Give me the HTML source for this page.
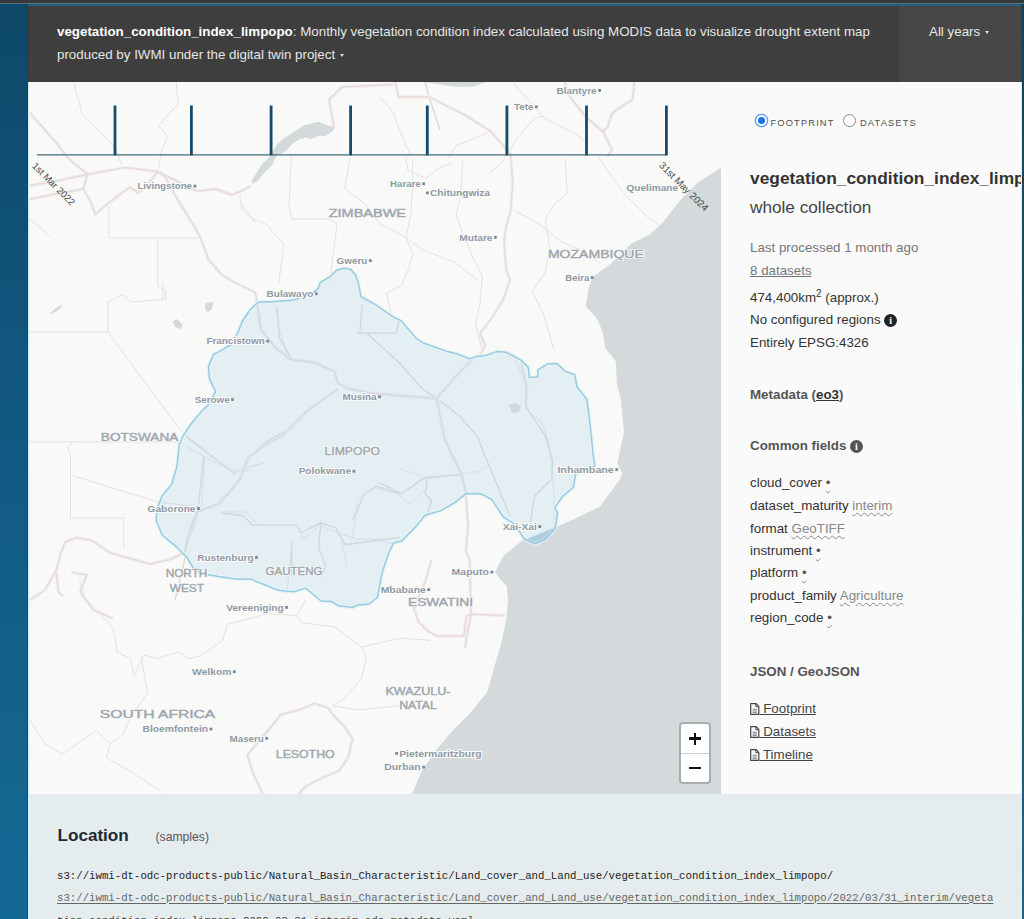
<!DOCTYPE html>
<html><head><meta charset="utf-8">
<style>
html,body{margin:0;padding:0;}
body{width:1024px;height:919px;overflow:hidden;position:relative;background:#37383a;font-family:"Liberation Sans",sans-serif;}
#lbar{position:absolute;left:0;top:4px;width:28px;height:915px;background:linear-gradient(#0d4868,#11577f 40%,#146994);box-shadow:inset -1px 0 0 rgba(20,50,70,0.35);}
#rbar{position:absolute;left:1022px;top:4px;width:2px;height:915px;background:linear-gradient(#15405a,#1d5572 50%,#245f80);}
#topline{position:absolute;left:0;top:3px;width:1024px;height:1px;background:#5a7479;}
#tealline{position:absolute;left:28px;top:4px;width:993px;height:2px;background:#1f5f78;}
#header{position:absolute;left:28px;top:6px;width:994px;height:76px;background:#3e3e3e;color:#e6e6e6;}
#htext{position:absolute;left:29px;top:14px;width:845px;font-size:13.35px;line-height:23px;}
#htext b{color:#fff;}
#years{position:absolute;left:871px;top:0;width:122px;height:76px;background:#474747;}
#years > span{position:absolute;left:30px;top:14px;white-space:nowrap;font-size:13.35px;line-height:23px;color:#e6e6e6;}
.caret{display:inline-block;width:0;height:0;border-left:2.5px solid transparent;border-right:2.5px solid transparent;border-top:3px solid #ddd;vertical-align:middle;margin-left:5px;}
#map{position:absolute;left:28px;top:82px;width:693px;height:712px;overflow:hidden;background:#f9f9f8;}
#panel{position:absolute;left:721px;top:82px;width:301px;height:712px;background:#fafafa;color:#333;font-size:13.35px;}
#loc{position:absolute;left:28px;top:794px;width:994px;height:125px;background:#e5ecee;}

.t{position:absolute;left:29px;white-space:nowrap;font-size:13.35px;line-height:23px;color:#333;}
.gray{color:#777;}
.b{font-weight:bold;color:#555;}
.u{text-decoration:underline;}
.wavy{color:#888;text-decoration:underline wavy #8a8a8a;text-decoration-thickness:1px;text-underline-offset:2px;}
.info{display:inline-block;width:13px;height:13px;border-radius:50%;background:#222;color:#fff;font-size:10px;line-height:13px;text-align:center;font-weight:bold;font-family:"Liberation Serif",serif;vertical-align:0.5px;margin-left:3.5px;}
.radio{position:absolute;width:11px;height:11px;border-radius:50%;border:1px solid #888;background:#fff;}
.rlabel{position:absolute;font-size:9.3px;letter-spacing:1.15px;color:#505050;white-space:nowrap;line-height:12px;}
.fic{display:inline-block;width:9.5px;height:12px;vertical-align:-1.5px;margin-right:0;}
.mono{position:absolute;left:29px;font-family:"Liberation Mono",monospace;font-size:10.7px;line-height:14px;white-space:nowrap;}
</style></head><body>
<div id="topline"></div>
<div id="lbar"></div><div id="rbar"></div>
<div id="tealline"></div>
<div id="header">
 <div id="htext"><b>vegetation_condition_index_limpopo</b>: Monthly vegetation condition index calculated using MODIS data to visualize drought extent map produced by IWMI under the digital twin project<span class="caret"></span></div>
 <div id="years"><span>All years<span class="caret"></span></span></div>
</div>
<div id="map"><svg id="mapsvg" width="693" height="712" viewBox="28 82 693 712" style="position:absolute;left:0;top:0">
<rect x="28" y="82" width="693" height="712" fill="#f9f9f8"/>
<path d="M367.0 333.2 L398.8 362.5 L423.2 389.4 L437.9 399.2" fill="none" stroke="#dad6d4" stroke-width="1.3"/>
<path d="M437.9 399.2 L459.9 416.3 L477.0 435.8 L486.7 460.0 L499.3 489.8 L509.7 516.0" fill="none" stroke="#dad6d4" stroke-width="1.3"/>
<path d="M286.7 430.0 L262.3 444.6 L245.2 461.7 L240.3 478.8 L230.6 491.0 L220.8 503.2 L198.8 510.6 L193.9 525.2 L186.6 544.7 L184.2 561.8 L175.0 600.0" fill="none" stroke="#dad6d4" stroke-width="1.3"/>
<path d="M425.0 82.0 L430.0 100.0 L440.0 130.0" fill="none" stroke="#dad6d4" stroke-width="1.3"/>
<path d="M520.9 362.5 L525.8 382.0 L525.8 406.5 L535.5 421.1 L545.3 435.8 L552.6 460.0 L551.9 478.7 L534.7 496.0 L530.4 521.6" fill="none" stroke="#dad6d4" stroke-width="1.3"/>
<path d="M398.8 321.0 L396.4 333.2 L357.3 333.2" fill="none" stroke="#dad6d4" stroke-width="1.3"/>
<path d="M362.2 304.0 L359.8 333.2" fill="none" stroke="#dad6d4" stroke-width="1.3"/>
<path d="M277.2 307.2 L279.2 338.0 L291.5 358.4" fill="none" stroke="#dad6d4" stroke-width="1.3"/>
<path d="M203.7 456.9 L198.8 503.2" fill="none" stroke="#dad6d4" stroke-width="1.3"/>
<path d="M186.6 437.3 L235.4 473.9" fill="none" stroke="#dad6d4" stroke-width="1.3"/>
<path d="M220.8 513.0 L242.8 515.4 L252.5 525.2 L296.5 525.2 L301.4 532.5 L320.9 522.8 L335.5 527.7 L345.3 544.7 L400.0 537.4" fill="none" stroke="#dad6d4" stroke-width="1.3"/>
<path d="M352.6 520.3 L364.8 493.5 L377.0 486.2 L400.0 493.5" fill="none" stroke="#dad6d4" stroke-width="1.3"/>
<path d="M291.6 542.3 L291.6 576.5" fill="none" stroke="#dad6d4" stroke-width="1.3"/>
<path d="M320.9 522.8 L318.5 547.2 L325.8 566.7 L320.9 576.5" fill="none" stroke="#dad6d4" stroke-width="1.3"/>
<path d="M380.0 483.0 L401.5 493.7 L423.0 478.7 L461.6 474.4" fill="none" stroke="#dad6d4" stroke-width="1.3"/>
<path d="M427.3 478.7 L425.1 493.7 L431.6 500.2 L427.3 515.2" fill="none" stroke="#dad6d4" stroke-width="1.3"/>
<path d="M28.0 332.0 L108.0 332.0 L178.0 427.0 L188.0 437.0 L233.0 472.0 L250.0 470.0" fill="none" stroke="#e4e1df" stroke-width="1"/>
<path d="M108.0 332.0 L108.0 302.0 L123.0 294.5 L130.5 302.0 L163.0 299.5 L163.0 282.0" fill="none" stroke="#e4e1df" stroke-width="1"/>
<path d="M28.0 442.0 L178.0 442.0" fill="none" stroke="#e4e1df" stroke-width="1"/>
<path d="M73.0 442.0 L68.0 447.0 L70.5 457.0 L70.5 518.0 L123.7 518.0 L123.7 548.7" fill="none" stroke="#e4e1df" stroke-width="1"/>
<path d="M73.0 475.8 L158.0 502.0 L198.0 507.0" fill="none" stroke="#e4e1df" stroke-width="1"/>
<path d="M108.8 206.6 L108.8 237.9 L198.7 237.9" fill="none" stroke="#e4e1df" stroke-width="1"/>
<path d="M157.7 237.9 L157.7 286.7 L165.5 290.6 L165.5 300.0" fill="none" stroke="#e4e1df" stroke-width="1"/>
<path d="M73.7 82.0 L82.4 114.6 L99.8 132.0 L115.0 147.3 L121.6 164.7" fill="none" stroke="#e4e1df" stroke-width="1"/>
<path d="M176.0 82.0 L178.2 103.8 L158.6 125.5 L167.3 136.4 L160.8 153.8 L158.6 169.0" fill="none" stroke="#e4e1df" stroke-width="1"/>
<path d="M28.0 217.0 L49.8 236.5" fill="none" stroke="#e4e1df" stroke-width="1"/>
<path d="M239.7 195.0 L241.6 208.6 L255.3 222.3" fill="none" stroke="#e4e1df" stroke-width="1"/>
<path d="M380.3 97.2 L393.0 112.5 L405.7 145.5 L410.7 153.0 L405.7 158.0 L408.2 170.8 L426.0 178.4 L438.7 168.3 L451.4 163.2" fill="none" stroke="#e4e1df" stroke-width="1"/>
<path d="M291.5 155.6 L289.0 203.8 L291.5 219.0 L329.5 219.0 L337.1 224.1 L329.5 282.5" fill="none" stroke="#e4e1df" stroke-width="1"/>
<path d="M349.8 158.0 L344.8 188.6 L365.0 203.8 L380.0 224.0" fill="none" stroke="#e4e1df" stroke-width="1"/>
<path d="M448.8 158.0 L456.4 145.5 L488.0 132.8" fill="none" stroke="#e4e1df" stroke-width="1"/>
<path d="M240.7 203.8 L253.4 219.0 L266.0 224.1 L283.8 244.4 L278.8 282.5" fill="none" stroke="#e4e1df" stroke-width="1"/>
<path d="M276.0 307.0 L279.0 327.4 L287.7 356.7" fill="none" stroke="#e4e1df" stroke-width="1"/>
<path d="M412.6 160.0 L412.6 189.2 L410.5 215.3 L406.1 237.0 L412.6 254.5 L408.3 269.7 L401.8 285.0 L386.5 293.6 L390.9 313.2" fill="none" stroke="#e4e1df" stroke-width="1"/>
<path d="M463.0 160.0 L460.5 195.7 L456.2 215.3 L462.7 232.7 L471.4 254.5 L482.3 276.2 L480.1 302.3 L475.8 324.1 L482.3 350.0" fill="none" stroke="#e4e1df" stroke-width="1"/>
<path d="M565.0 158.7 L567.2 193.5 L554.1 204.4 L545.4 219.6 L549.7 248.0 L545.4 271.9 L532.3 291.5 L543.2 313.2 L554.1 350.0" fill="none" stroke="#e4e1df" stroke-width="1"/>
<path d="M380.0 224.0 L401.8 234.9 L423.5 250.1 L456.2 263.2 L477.9 280.6" fill="none" stroke="#e4e1df" stroke-width="1"/>
<path d="M514.9 211.0 L532.3 219.6 L545.4 228.3 L560.6 241.4 L580.2 250.1 L600.0 263.2" fill="none" stroke="#e4e1df" stroke-width="1"/>
<path d="M598.3 156.5 L611.8 176.8 L625.3 195.0 L647.8 217.5 L661.7 227.0" fill="none" stroke="#e4e1df" stroke-width="1"/>
<path d="M512.6 82.0 L544.0 118.0 L575.8 134.0 L587.0 143.0" fill="none" stroke="#e4e1df" stroke-width="1"/>
<path d="M490.0 172.3 L501.3 163.3 L517.0 138.4 L535.0 118.0 L544.0 116.0" fill="none" stroke="#e4e1df" stroke-width="1"/>
<path d="M512.4 354.0 L528.0 388.0 L525.4 408.8 L541.1 421.9 L549.0 442.8 L551.6 466.3 L554.2 497.7 L554.2 529.0" fill="none" stroke="#e4e1df" stroke-width="1"/>
<path d="M79.3 580.0 L86.1 600.5 L113.4 627.8 L116.9 651.8 L130.5 658.6 L134.0 675.7 L144.2 655.2 L157.9 658.6 L178.4 651.8 L188.6 658.6 L200.0 656.0 L222.5 640.4 L227.0 624.7 L267.4 613.5 L296.6 615.7 L301.0 622.5 L334.8 627.0 L361.7 647.2 L366.2 658.4 L361.7 678.6 L343.8 698.8 L332.5 705.6" fill="none" stroke="#e4e1df" stroke-width="1"/>
<path d="M296.6 615.7 L305.6 600.0" fill="none" stroke="#e4e1df" stroke-width="1"/>
<path d="M332.5 705.6 L357.2 710.0 L379.7 707.8 L402.2 705.6 L430.0 707.8" fill="none" stroke="#e4e1df" stroke-width="1"/>
<path d="M361.7 647.2 L379.7 642.7 L402.2 638.2 L430.0 640.4" fill="none" stroke="#e4e1df" stroke-width="1"/>
<path d="M140.8 655.2 L147.6 692.8 L130.5 716.7 L123.7 733.8 L110.0 744.0 L106.6 757.7 L130.5 771.4 L161.3 791.9" fill="none" stroke="#e4e1df" stroke-width="1"/>
<path d="M28.0 716.7 L45.1 744.0 L62.2 754.3 L96.4 730.4 L110.0 744.0" fill="none" stroke="#e4e1df" stroke-width="1"/>
<path d="M204.7 457.3 L202.0 503.8 L196.5 512.0" fill="none" stroke="#e4e1df" stroke-width="1"/>
<path d="M185.5 446.4 L232.0 471.0 L264.8 462.8" fill="none" stroke="#e4e1df" stroke-width="1"/>
<path d="M221.0 512.0 L245.7 512.0 L259.4 525.7 L297.7 525.7 L303.1 539.4 L319.5 525.7 L341.4 534.0 L357.8 539.4 L379.7 539.4 L393.4 544.8" fill="none" stroke="#e4e1df" stroke-width="1"/>
<path d="M357.8 498.4 L374.2 487.4 L396.1 492.9 L409.8 503.8 L430.0 484.7" fill="none" stroke="#e4e1df" stroke-width="1"/>
<path d="M352.3 539.4 L357.8 501.0" fill="none" stroke="#e4e1df" stroke-width="1"/>
<path d="M292.2 539.4 L289.5 566.7 L286.7 594.0" fill="none" stroke="#e4e1df" stroke-width="1"/>
<path d="M341.4 539.4 L346.9 566.7" fill="none" stroke="#e4e1df" stroke-width="1"/>
<path d="M400.0 469.0 L423.5 476.8 L431.4 476.8 L460.0 474.2 L478.4 471.5 L486.2 466.3" fill="none" stroke="#e4e1df" stroke-width="1"/>
<path d="M28.0 110.8 L55.3 141.5 L67.8 157.8 L87.3 174.4" fill="none" stroke="#f3eeee" stroke-width="3.5" stroke-linejoin="round"/>
<path d="M28.0 186.0 L60.0 180.3 L87.3 174.4 L124.5 167.6 L142.0 169.5 L157.7 171.5 L165.5 177.3 L177.2 198.8 L192.8 224.2 L200.6 237.9 L208.4 259.4 L222.0 275.0 L235.8 282.8 L255.3 292.6 L257.0 304.0 L261.3 330.3 L276.0 348.0 L290.6 359.6 L314.0 362.5 L334.6 371.3 L337.5 383.0 L349.2 389.0 L372.7 393.3 L400.0 395.8 L436.6 398.4" fill="none" stroke="#f3eeee" stroke-width="3.5" stroke-linejoin="round"/>
<path d="M28.0 199.6 L60.0 193.0 L83.4 189.0" fill="none" stroke="#f3eeee" stroke-width="3.5" stroke-linejoin="round"/>
<path d="M87.3 174.4 L83.4 189.0 L91.2 202.7 L95.2 214.5 L108.8 202.7 L124.5 191.0 L130.3 187.1 L138.1 193.0 L146.0 187.1 L157.7 171.5" fill="none" stroke="#f3eeee" stroke-width="3.5" stroke-linejoin="round"/>
<path d="M157.7 171.5 L196.7 191.0 L216.2 189.0 L231.9 195.0 L245.5 189.0 L250.8 186.0" fill="none" stroke="#f3eeee" stroke-width="3.5" stroke-linejoin="round"/>
<path d="M334.0 127.0 L329.0 99.8 L342.0 87.0 L393.0 84.5" fill="none" stroke="#f3eeee" stroke-width="3.5" stroke-linejoin="round"/>
<path d="M395.0 80.0 L398.5 97.0 L429.3 97.0 L463.4 114.2 L490.8 131.3 L510.6 154.4 L512.8 182.6 L510.6 211.0 L506.2 226.2 L504.0 241.4 L506.2 269.7 L510.0 280.0 L503.0 300.0 L492.0 318.0 L480.0 333.0 L485.0 345.0 L481.8 352.8 L474.5 357.6 L455.0 377.2 L436.6 398.4" fill="none" stroke="#f3eeee" stroke-width="3.5" stroke-linejoin="round"/>
<path d="M436.6 398.4 L444.4 437.6 L450.9 452.9 L461.6 474.4 L465.9 493.7 L468.0 525.9 L465.9 551.7 L469.6 560.0 L471.0 615.6 L466.6 636.1 L465.2 647.8" fill="none" stroke="#f3eeee" stroke-width="3.5" stroke-linejoin="round"/>
<path d="M431.5 560.0 L425.6 580.5 L413.9 608.3 L418.3 621.5 L428.6 631.7 L437.3 636.1 L463.7 636.1 L466.6 615.6 L472.5 614.2 L504.7 615.6" fill="none" stroke="#f3eeee" stroke-width="3.5" stroke-linejoin="round"/>
<path d="M337.5 389.0 L305.3 412.4 L281.8 435.8 L261.3 447.5 L248.4 457.3 L240.2 479.2 L226.6 495.6 L218.4 503.8 L196.5 512.0 L190.0 530.0 L184.5 553.0 L169.3 559.6 L149.7 564.0 L130.2 558.5 L110.6 553.0 L91.0 540.0 L75.8 537.8 L65.0 542.0 L60.0 556.0 L56.3 570.4 L45.0 590.0 L28.0 601.0" fill="none" stroke="#f3eeee" stroke-width="3.5" stroke-linejoin="round"/>
<path d="M56.3 572.6 L58.5 592.0 L63.0 596.5" fill="none" stroke="#f3eeee" stroke-width="3.5" stroke-linejoin="round"/>
<path d="M71.5 572.6 L86.7 574.8 L80.2 592.0 L93.2 609.6 L112.8 618.3" fill="none" stroke="#f3eeee" stroke-width="3.5" stroke-linejoin="round"/>
<path d="M247.2 755.0 L271.9 725.8 L280.9 714.6 L298.8 710.0 L314.6 703.3 L328.0 707.8 L334.8 716.8 L343.8 725.8 L352.7 739.3 L348.2 757.2 L339.3 770.7 L323.5 777.4 L305.6 786.4 L298.8 794.0" fill="none" stroke="#f3eeee" stroke-width="3.5" stroke-linejoin="round"/>
<path d="M247.2 755.0 L253.9 775.2 L262.9 794.0" fill="none" stroke="#f3eeee" stroke-width="3.5" stroke-linejoin="round"/>
<path d="M565.0 82.0 L569.0 95.5 L584.9 116.0 L602.9 131.6 L612.0 149.7 L607.5 156.5" fill="none" stroke="#f3eeee" stroke-width="3.5" stroke-linejoin="round"/>
<path d="M634.5 82.0 L632.3 100.0 L621.0 106.8 L612.0 113.6 L607.5 127.0 L602.9 131.6" fill="none" stroke="#f3eeee" stroke-width="3.5" stroke-linejoin="round"/>
<path d="M28.0 110.8 L55.3 141.5 L67.8 157.8 L87.3 174.4" fill="none" stroke="#e6dada" stroke-width="1.4" stroke-linejoin="round"/>
<path d="M28.0 186.0 L60.0 180.3 L87.3 174.4 L124.5 167.6 L142.0 169.5 L157.7 171.5 L165.5 177.3 L177.2 198.8 L192.8 224.2 L200.6 237.9 L208.4 259.4 L222.0 275.0 L235.8 282.8 L255.3 292.6 L257.0 304.0 L261.3 330.3 L276.0 348.0 L290.6 359.6 L314.0 362.5 L334.6 371.3 L337.5 383.0 L349.2 389.0 L372.7 393.3 L400.0 395.8 L436.6 398.4" fill="none" stroke="#e6dada" stroke-width="1.4" stroke-linejoin="round"/>
<path d="M28.0 199.6 L60.0 193.0 L83.4 189.0" fill="none" stroke="#e6dada" stroke-width="1.4" stroke-linejoin="round"/>
<path d="M87.3 174.4 L83.4 189.0 L91.2 202.7 L95.2 214.5 L108.8 202.7 L124.5 191.0 L130.3 187.1 L138.1 193.0 L146.0 187.1 L157.7 171.5" fill="none" stroke="#e6dada" stroke-width="1.4" stroke-linejoin="round"/>
<path d="M157.7 171.5 L196.7 191.0 L216.2 189.0 L231.9 195.0 L245.5 189.0 L250.8 186.0" fill="none" stroke="#e6dada" stroke-width="1.4" stroke-linejoin="round"/>
<path d="M334.0 127.0 L329.0 99.8 L342.0 87.0 L393.0 84.5" fill="none" stroke="#e6dada" stroke-width="1.4" stroke-linejoin="round"/>
<path d="M395.0 80.0 L398.5 97.0 L429.3 97.0 L463.4 114.2 L490.8 131.3 L510.6 154.4 L512.8 182.6 L510.6 211.0 L506.2 226.2 L504.0 241.4 L506.2 269.7 L510.0 280.0 L503.0 300.0 L492.0 318.0 L480.0 333.0 L485.0 345.0 L481.8 352.8 L474.5 357.6 L455.0 377.2 L436.6 398.4" fill="none" stroke="#e6dada" stroke-width="1.4" stroke-linejoin="round"/>
<path d="M436.6 398.4 L444.4 437.6 L450.9 452.9 L461.6 474.4 L465.9 493.7 L468.0 525.9 L465.9 551.7 L469.6 560.0 L471.0 615.6 L466.6 636.1 L465.2 647.8" fill="none" stroke="#e6dada" stroke-width="1.4" stroke-linejoin="round"/>
<path d="M431.5 560.0 L425.6 580.5 L413.9 608.3 L418.3 621.5 L428.6 631.7 L437.3 636.1 L463.7 636.1 L466.6 615.6 L472.5 614.2 L504.7 615.6" fill="none" stroke="#e6dada" stroke-width="1.4" stroke-linejoin="round"/>
<path d="M337.5 389.0 L305.3 412.4 L281.8 435.8 L261.3 447.5 L248.4 457.3 L240.2 479.2 L226.6 495.6 L218.4 503.8 L196.5 512.0 L190.0 530.0 L184.5 553.0 L169.3 559.6 L149.7 564.0 L130.2 558.5 L110.6 553.0 L91.0 540.0 L75.8 537.8 L65.0 542.0 L60.0 556.0 L56.3 570.4 L45.0 590.0 L28.0 601.0" fill="none" stroke="#e6dada" stroke-width="1.4" stroke-linejoin="round"/>
<path d="M56.3 572.6 L58.5 592.0 L63.0 596.5" fill="none" stroke="#e6dada" stroke-width="1.4" stroke-linejoin="round"/>
<path d="M71.5 572.6 L86.7 574.8 L80.2 592.0 L93.2 609.6 L112.8 618.3" fill="none" stroke="#e6dada" stroke-width="1.4" stroke-linejoin="round"/>
<path d="M247.2 755.0 L271.9 725.8 L280.9 714.6 L298.8 710.0 L314.6 703.3 L328.0 707.8 L334.8 716.8 L343.8 725.8 L352.7 739.3 L348.2 757.2 L339.3 770.7 L323.5 777.4 L305.6 786.4 L298.8 794.0" fill="none" stroke="#e6dada" stroke-width="1.4" stroke-linejoin="round"/>
<path d="M247.2 755.0 L253.9 775.2 L262.9 794.0" fill="none" stroke="#e6dada" stroke-width="1.4" stroke-linejoin="round"/>
<path d="M565.0 82.0 L569.0 95.5 L584.9 116.0 L602.9 131.6 L612.0 149.7 L607.5 156.5" fill="none" stroke="#e6dada" stroke-width="1.4" stroke-linejoin="round"/>
<path d="M634.5 82.0 L632.3 100.0 L621.0 106.8 L612.0 113.6 L607.5 127.0 L602.9 131.6" fill="none" stroke="#e6dada" stroke-width="1.4" stroke-linejoin="round"/>
<path d="M251.8 180.5 L261.5 164.8 L269.4 157.0 L277.2 144.3 L283.1 138.4 L287.0 136.4 L294.8 131.5 L302.7 125.7 L310.5 123.7 L318.4 121.8 L326.2 124.7 L335.0 127.6 L332.1 131.5 L325.2 136.4 L318.4 135.5 L310.5 139.4 L306.6 137.4 L298.8 139.4 L292.9 143.3 L286.0 151.1 L276.2 156.0 L272.3 164.8 L264.5 172.7 L257.6 180.5 L251.8 184.4 Z" fill="#d4d9dc"/>
<path d="M424.0 82.0 L440.0 84.5 L458.0 87.0 L474.0 86.5 L486.0 82.0 Z" fill="#d4d9dc"/>
<path d="M50.5 313.0 L56.0 308.0 L63.0 304.5 L60.0 309.0 L52.0 314.0 Z" fill="#d4d9dc"/>
<path d="M172.6 321.5 L177.0 319.0 L182.8 325.0 L181.0 329.0 L175.0 327.0 Z" fill="#d4d9dc"/>
<path d="M205.4 303.0 L213.6 302.0 L212.0 309.0 L208.0 312.0 L205.0 309.0 Z" fill="#d4d9dc"/>
<path d="M509.0 405.0 L515.0 403.0 L521.0 406.0 L519.0 412.0 L512.0 413.0 Z" fill="#d4d9dc"/>
<path d="M721.0 167.8 L696.7 183.5 L681.0 199.2 L662.7 222.7 L649.7 234.4 L631.4 243.6 L613.1 261.8 L592.2 277.5 L588.3 290.5 L585.7 306.2 L597.4 319.3 L602.7 332.3 L605.3 348.0 L615.7 361.0 L617.0 384.5 L621.0 400.0 L624.0 432.5 L617.2 463.3 L622.4 473.5 L619.5 480.0 L609.0 494.0 L600.0 506.6 L573.3 519.5 L558.3 525.9 L521.0 541.6 L503.4 555.7 L495.2 572.0 L500.3 579.6 L506.7 586.0 L508.0 600.0 L506.3 619.4 L501.0 643.8 L494.0 668.0 L487.0 692.5 L469.7 713.4 L452.3 730.9 L434.8 751.8 L420.9 772.7 L412.2 793.6 L410.0 800.0 L730.0 800.0 L730.0 160.0 Z" fill="#d4d9dc"/>
<clipPath id="oc"><path d="M721.0 167.8 L696.7 183.5 L681.0 199.2 L662.7 222.7 L649.7 234.4 L631.4 243.6 L613.1 261.8 L592.2 277.5 L588.3 290.5 L585.7 306.2 L597.4 319.3 L602.7 332.3 L605.3 348.0 L615.7 361.0 L617.0 384.5 L621.0 400.0 L624.0 432.5 L617.2 463.3 L622.4 473.5 L619.5 480.0 L609.0 494.0 L600.0 506.6 L573.3 519.5 L558.3 525.9 L521.0 541.6 L503.4 555.7 L495.2 572.0 L500.3 579.6 L506.7 586.0 L508.0 600.0 L506.3 619.4 L501.0 643.8 L494.0 668.0 L487.0 692.5 L469.7 713.4 L452.3 730.9 L434.8 751.8 L420.9 772.7 L412.2 793.6 L410.0 800.0 L730.0 800.0 L730.0 160.0 Z"/></clipPath>
<path d="M336.6 270.3 L344.5 268.2 L351.0 269.5 L355.5 275.0 L358.5 284.0 L361.0 296.6 L374.4 304.0 L394.0 317.4 L401.3 321.0 L416.0 338.1 L423.2 343.0 L447.7 351.6 L457.4 354.0 L469.6 358.9 L477.0 356.4 L486.7 355.2 L496.5 351.6 L506.3 352.3 L520.9 360.1 L528.2 367.4 L529.4 377.2 L538.0 377.2 L538.0 369.9 L547.8 363.8 L557.5 363.8 L564.8 371.1 L574.6 374.7 L577.0 387.0 L586.8 399.2 L589.3 418.7 L591.7 440.0 L592.7 452.0 L594.8 465.8 L575.5 474.4 L573.3 487.3 L562.0 497.0 L555.0 507.6 L557.4 513.4 L555.0 528.7 L545.6 539.2 L535.1 543.9 L524.5 539.2 L519.9 532.2 L512.8 522.8 L503.4 517.0 L491.7 499.4 L480.0 493.5 L465.9 493.7 L455.2 502.3 L440.2 510.9 L425.1 515.2 L416.5 525.9 L401.5 541.0 L393.5 543.0 L388.3 554.0 L382.0 572.9 L379.6 585.8 L377.3 597.5 L369.1 604.0 L357.4 605.1 L352.7 607.5 L338.6 605.7 L331.6 601.6 L321.0 601.0 L312.8 594.0 L305.8 588.1 L294.1 591.7 L280.0 590.5 L274.5 588.7 L262.3 583.8 L250.1 578.9 L235.4 578.9 L218.4 576.5 L203.7 574.0 L194.0 569.2 L186.6 557.0 L176.9 547.2 L162.2 535.0 L156.1 520.3 L157.3 508.1 L162.2 495.9 L172.0 483.7 L176.9 466.6 L179.3 444.6 L183.0 436.0 L191.0 424.0 L201.3 411.8 L209.5 403.6 L215.6 391.3 L209.5 379.0 L208.4 366.6 L213.6 354.3 L221.8 350.2 L232.0 344.0 L238.2 331.8 L242.3 321.5 L250.5 309.2 L258.7 302.0 L269.0 302.0 L293.6 300.0 L310.0 294.9 L318.2 288.7 L320.2 282.6 L330.5 276.4 Z" fill="#b2d7ea" fill-opacity="0.3" stroke="#e2f4fa" stroke-opacity="0.8" stroke-width="4" stroke-linejoin="round"/>
<path d="M336.6 270.3 L344.5 268.2 L351.0 269.5 L355.5 275.0 L358.5 284.0 L361.0 296.6 L374.4 304.0 L394.0 317.4 L401.3 321.0 L416.0 338.1 L423.2 343.0 L447.7 351.6 L457.4 354.0 L469.6 358.9 L477.0 356.4 L486.7 355.2 L496.5 351.6 L506.3 352.3 L520.9 360.1 L528.2 367.4 L529.4 377.2 L538.0 377.2 L538.0 369.9 L547.8 363.8 L557.5 363.8 L564.8 371.1 L574.6 374.7 L577.0 387.0 L586.8 399.2 L589.3 418.7 L591.7 440.0 L592.7 452.0 L594.8 465.8 L575.5 474.4 L573.3 487.3 L562.0 497.0 L555.0 507.6 L557.4 513.4 L555.0 528.7 L545.6 539.2 L535.1 543.9 L524.5 539.2 L519.9 532.2 L512.8 522.8 L503.4 517.0 L491.7 499.4 L480.0 493.5 L465.9 493.7 L455.2 502.3 L440.2 510.9 L425.1 515.2 L416.5 525.9 L401.5 541.0 L393.5 543.0 L388.3 554.0 L382.0 572.9 L379.6 585.8 L377.3 597.5 L369.1 604.0 L357.4 605.1 L352.7 607.5 L338.6 605.7 L331.6 601.6 L321.0 601.0 L312.8 594.0 L305.8 588.1 L294.1 591.7 L280.0 590.5 L274.5 588.7 L262.3 583.8 L250.1 578.9 L235.4 578.9 L218.4 576.5 L203.7 574.0 L194.0 569.2 L186.6 557.0 L176.9 547.2 L162.2 535.0 L156.1 520.3 L157.3 508.1 L162.2 495.9 L172.0 483.7 L176.9 466.6 L179.3 444.6 L183.0 436.0 L191.0 424.0 L201.3 411.8 L209.5 403.6 L215.6 391.3 L209.5 379.0 L208.4 366.6 L213.6 354.3 L221.8 350.2 L232.0 344.0 L238.2 331.8 L242.3 321.5 L250.5 309.2 L258.7 302.0 L269.0 302.0 L293.6 300.0 L310.0 294.9 L318.2 288.7 L320.2 282.6 L330.5 276.4 Z" fill="#8fc0da" fill-opacity="0.45" clip-path="url(#oc)"/>
<path d="M336.6 270.3 L344.5 268.2 L351.0 269.5 L355.5 275.0 L358.5 284.0 L361.0 296.6 L374.4 304.0 L394.0 317.4 L401.3 321.0 L416.0 338.1 L423.2 343.0 L447.7 351.6 L457.4 354.0 L469.6 358.9 L477.0 356.4 L486.7 355.2 L496.5 351.6 L506.3 352.3 L520.9 360.1 L528.2 367.4 L529.4 377.2 L538.0 377.2 L538.0 369.9 L547.8 363.8 L557.5 363.8 L564.8 371.1 L574.6 374.7 L577.0 387.0 L586.8 399.2 L589.3 418.7 L591.7 440.0 L592.7 452.0 L594.8 465.8 L575.5 474.4 L573.3 487.3 L562.0 497.0 L555.0 507.6 L557.4 513.4 L555.0 528.7 L545.6 539.2 L535.1 543.9 L524.5 539.2 L519.9 532.2 L512.8 522.8 L503.4 517.0 L491.7 499.4 L480.0 493.5 L465.9 493.7 L455.2 502.3 L440.2 510.9 L425.1 515.2 L416.5 525.9 L401.5 541.0 L393.5 543.0 L388.3 554.0 L382.0 572.9 L379.6 585.8 L377.3 597.5 L369.1 604.0 L357.4 605.1 L352.7 607.5 L338.6 605.7 L331.6 601.6 L321.0 601.0 L312.8 594.0 L305.8 588.1 L294.1 591.7 L280.0 590.5 L274.5 588.7 L262.3 583.8 L250.1 578.9 L235.4 578.9 L218.4 576.5 L203.7 574.0 L194.0 569.2 L186.6 557.0 L176.9 547.2 L162.2 535.0 L156.1 520.3 L157.3 508.1 L162.2 495.9 L172.0 483.7 L176.9 466.6 L179.3 444.6 L183.0 436.0 L191.0 424.0 L201.3 411.8 L209.5 403.6 L215.6 391.3 L209.5 379.0 L208.4 366.6 L213.6 354.3 L221.8 350.2 L232.0 344.0 L238.2 331.8 L242.3 321.5 L250.5 309.2 L258.7 302.0 L269.0 302.0 L293.6 300.0 L310.0 294.9 L318.2 288.7 L320.2 282.6 L330.5 276.4 Z" fill="none" stroke="#9ccadd" stroke-width="1.5" stroke-linejoin="round"/>
<text x="137.4" y="189.3" textLength="54.6" lengthAdjust="spacingAndGlyphs" font-family="Liberation Sans" font-size="9.2" font-weight="bold" fill="#8f99a4" stroke="#fbfbfb" stroke-width="2" paint-order="stroke">Livingstone</text>
<rect x="193.5" y="184.7" width="2.8" height="2.8" fill="#7d8996"/>
<text x="390.0" y="186.9" textLength="30.7" lengthAdjust="spacingAndGlyphs" font-family="Liberation Sans" font-size="9.2" font-weight="bold" fill="#8f99a4" stroke="#fbfbfb" stroke-width="2" paint-order="stroke">Harare</text>
<rect x="422.2" y="182.3" width="2.8" height="2.8" fill="#7d8996"/>
<text x="430.0" y="196.1" textLength="60.0" lengthAdjust="spacingAndGlyphs" font-family="Liberation Sans" font-size="9.2" font-weight="bold" fill="#8f99a4" stroke="#fbfbfb" stroke-width="2" paint-order="stroke">Chitungwiza</text>
<rect x="426.0" y="191.5" width="2.8" height="2.8" fill="#7d8996"/>
<text x="459.3" y="240.5" textLength="33.2" lengthAdjust="spacingAndGlyphs" font-family="Liberation Sans" font-size="9.2" font-weight="bold" fill="#8f99a4" stroke="#fbfbfb" stroke-width="2" paint-order="stroke">Mutare</text>
<rect x="494.0" y="235.9" width="2.8" height="2.8" fill="#7d8996"/>
<text x="565.3" y="280.8" textLength="23.9" lengthAdjust="spacingAndGlyphs" font-family="Liberation Sans" font-size="9.2" font-weight="bold" fill="#8f99a4" stroke="#fbfbfb" stroke-width="2" paint-order="stroke">Beira</text>
<rect x="590.7" y="276.2" width="2.8" height="2.8" fill="#7d8996"/>
<text x="626.5" y="191.0" textLength="51.5" lengthAdjust="spacingAndGlyphs" font-family="Liberation Sans" font-size="9.2" font-weight="bold" fill="#8f99a4" stroke="#fbfbfb" stroke-width="2" paint-order="stroke">Quelimane</text>
<text x="514.0" y="110.0" textLength="19.5" lengthAdjust="spacingAndGlyphs" font-family="Liberation Sans" font-size="9.2" font-weight="bold" fill="#8f99a4" stroke="#fbfbfb" stroke-width="2" paint-order="stroke">Tete</text>
<rect x="535.0" y="105.4" width="2.8" height="2.8" fill="#7d8996"/>
<text x="556.4" y="93.6" textLength="40.3" lengthAdjust="spacingAndGlyphs" font-family="Liberation Sans" font-size="9.2" font-weight="bold" fill="#8f99a4" stroke="#fbfbfb" stroke-width="2" paint-order="stroke">Blantyre</text>
<rect x="598.2" y="89.0" width="2.8" height="2.8" fill="#7d8996"/>
<text x="336.6" y="263.8" textLength="30.8" lengthAdjust="spacingAndGlyphs" font-family="Liberation Sans" font-size="9.2" font-weight="bold" fill="#8f99a4" stroke="#fbfbfb" stroke-width="2" paint-order="stroke">Gweru</text>
<rect x="368.9" y="259.2" width="2.8" height="2.8" fill="#7d8996"/>
<text x="266.5" y="296.9" textLength="46.9" lengthAdjust="spacingAndGlyphs" font-family="Liberation Sans" font-size="9.2" font-weight="bold" fill="#8f99a4" stroke="#fbfbfb" stroke-width="2" paint-order="stroke">Bulawayo</text>
<rect x="314.9" y="292.3" width="2.8" height="2.8" fill="#7d8996"/>
<text x="206.4" y="344.3" textLength="58.4" lengthAdjust="spacingAndGlyphs" font-family="Liberation Sans" font-size="9.2" font-weight="bold" fill="#8f99a4" stroke="#fbfbfb" stroke-width="2" paint-order="stroke">Francistown</text>
<rect x="266.3" y="339.7" width="2.8" height="2.8" fill="#7d8996"/>
<text x="194.8" y="402.7" textLength="34.8" lengthAdjust="spacingAndGlyphs" font-family="Liberation Sans" font-size="9.2" font-weight="bold" fill="#8f99a4" stroke="#fbfbfb" stroke-width="2" paint-order="stroke">Serowe</text>
<rect x="231.1" y="398.1" width="2.8" height="2.8" fill="#7d8996"/>
<text x="342.4" y="399.9" textLength="34.2" lengthAdjust="spacingAndGlyphs" font-family="Liberation Sans" font-size="9.2" font-weight="bold" fill="#8f99a4" stroke="#fbfbfb" stroke-width="2" paint-order="stroke">Musina</text>
<rect x="378.1" y="395.3" width="2.8" height="2.8" fill="#7d8996"/>
<text x="298.7" y="474.4" textLength="52.3" lengthAdjust="spacingAndGlyphs" font-family="Liberation Sans" font-size="9.2" font-weight="bold" fill="#8f99a4" stroke="#fbfbfb" stroke-width="2" paint-order="stroke">Polokwane</text>
<rect x="352.5" y="469.8" width="2.8" height="2.8" fill="#7d8996"/>
<text x="147.6" y="511.7" textLength="47.9" lengthAdjust="spacingAndGlyphs" font-family="Liberation Sans" font-size="9.2" font-weight="bold" fill="#8f99a4" stroke="#fbfbfb" stroke-width="2" paint-order="stroke">Gaborone</text>
<rect x="197.0" y="507.1" width="2.8" height="2.8" fill="#7d8996"/>
<text x="197.2" y="560.6" textLength="56.4" lengthAdjust="spacingAndGlyphs" font-family="Liberation Sans" font-size="9.2" font-weight="bold" fill="#8f99a4" stroke="#fbfbfb" stroke-width="2" paint-order="stroke">Rustenburg</text>
<rect x="255.1" y="556.0" width="2.8" height="2.8" fill="#7d8996"/>
<text x="226.2" y="610.6" textLength="57.4" lengthAdjust="spacingAndGlyphs" font-family="Liberation Sans" font-size="9.2" font-weight="bold" fill="#8f99a4" stroke="#fbfbfb" stroke-width="2" paint-order="stroke">Vereeniging</text>
<rect x="285.1" y="606.0" width="2.8" height="2.8" fill="#7d8996"/>
<text x="192.0" y="674.9" textLength="39.4" lengthAdjust="spacingAndGlyphs" font-family="Liberation Sans" font-size="9.2" font-weight="bold" fill="#8f99a4" stroke="#fbfbfb" stroke-width="2" paint-order="stroke">Welkom</text>
<rect x="232.9" y="670.3" width="2.8" height="2.8" fill="#7d8996"/>
<text x="142.5" y="732.3" textLength="65.6" lengthAdjust="spacingAndGlyphs" font-family="Liberation Sans" font-size="9.2" font-weight="bold" fill="#8f99a4" stroke="#fbfbfb" stroke-width="2" paint-order="stroke">Bloemfontein</text>
<rect x="209.6" y="727.7" width="2.8" height="2.8" fill="#7d8996"/>
<text x="229.6" y="741.5" textLength="34.2" lengthAdjust="spacingAndGlyphs" font-family="Liberation Sans" font-size="9.2" font-weight="bold" fill="#8f99a4" stroke="#fbfbfb" stroke-width="2" paint-order="stroke">Maseru</text>
<rect x="265.3" y="736.9" width="2.8" height="2.8" fill="#7d8996"/>
<text x="557.4" y="472.7" textLength="56.4" lengthAdjust="spacingAndGlyphs" font-family="Liberation Sans" font-size="9.2" font-weight="bold" fill="#8f99a4" stroke="#fbfbfb" stroke-width="2" paint-order="stroke">Inhambane</text>
<rect x="615.3" y="468.1" width="2.8" height="2.8" fill="#7d8996"/>
<text x="502.7" y="529.8" textLength="34.2" lengthAdjust="spacingAndGlyphs" font-family="Liberation Sans" font-size="9.2" font-weight="bold" fill="#8f99a4" stroke="#fbfbfb" stroke-width="2" paint-order="stroke">Xai-Xai</text>
<rect x="538.4" y="525.2" width="2.8" height="2.8" fill="#7d8996"/>
<text x="451.5" y="575.3" textLength="37.5" lengthAdjust="spacingAndGlyphs" font-family="Liberation Sans" font-size="9.2" font-weight="bold" fill="#8f99a4" stroke="#fbfbfb" stroke-width="2" paint-order="stroke">Maputo</text>
<rect x="490.5" y="570.7" width="2.8" height="2.8" fill="#7d8996"/>
<text x="380.7" y="592.9" textLength="45.1" lengthAdjust="spacingAndGlyphs" font-family="Liberation Sans" font-size="9.2" font-weight="bold" fill="#8f99a4" stroke="#fbfbfb" stroke-width="2" paint-order="stroke">Mbabane</text>
<rect x="427.3" y="588.3" width="2.8" height="2.8" fill="#7d8996"/>
<text x="399.2" y="756.6" textLength="82.4" lengthAdjust="spacingAndGlyphs" font-family="Liberation Sans" font-size="9.2" font-weight="bold" fill="#8f99a4" stroke="#fbfbfb" stroke-width="2" paint-order="stroke">Pietermaritzburg</text>
<rect x="395.2" y="752.0" width="2.8" height="2.8" fill="#7d8996"/>
<text x="384.2" y="770.3" textLength="36.5" lengthAdjust="spacingAndGlyphs" font-family="Liberation Sans" font-size="9.2" font-weight="bold" fill="#8f99a4" stroke="#fbfbfb" stroke-width="2" paint-order="stroke">Durban</text>
<rect x="422.2" y="765.7" width="2.8" height="2.8" fill="#7d8996"/>
<text x="328.7" y="216.6" textLength="77.3" lengthAdjust="spacingAndGlyphs" font-family="Liberation Sans" font-size="11.2" font-weight="normal" fill="#fbfbfb" stroke="#fbfbfb" stroke-width="2" >ZIMBABWE</text>
<text x="328.7" y="216.6" textLength="77.3" lengthAdjust="spacingAndGlyphs" font-family="Liberation Sans" font-size="11.2" font-weight="normal" fill="#a0a7ae" stroke="#a0a7ae" stroke-width="0.45">ZIMBABWE</text>
<text x="547.9" y="257.6" textLength="96.0" lengthAdjust="spacingAndGlyphs" font-family="Liberation Sans" font-size="11.2" font-weight="normal" fill="#fbfbfb" stroke="#fbfbfb" stroke-width="2" >MOZAMBIQUE</text>
<text x="547.9" y="257.6" textLength="96.0" lengthAdjust="spacingAndGlyphs" font-family="Liberation Sans" font-size="11.2" font-weight="normal" fill="#a0a7ae" stroke="#a0a7ae" stroke-width="0.45">MOZAMBIQUE</text>
<text x="100.8" y="440.6" textLength="77.6" lengthAdjust="spacingAndGlyphs" font-family="Liberation Sans" font-size="11.2" font-weight="normal" fill="#fbfbfb" stroke="#fbfbfb" stroke-width="2" >BOTSWANA</text>
<text x="100.8" y="440.6" textLength="77.6" lengthAdjust="spacingAndGlyphs" font-family="Liberation Sans" font-size="11.2" font-weight="normal" fill="#a0a7ae" stroke="#a0a7ae" stroke-width="0.45">BOTSWANA</text>
<text x="324.6" y="455.3" textLength="55.4" lengthAdjust="spacingAndGlyphs" font-family="Liberation Sans" font-size="11.2" font-weight="normal" fill="#fbfbfb" stroke="#fbfbfb" stroke-width="2" >LIMPOPO</text>
<text x="324.6" y="455.3" textLength="55.4" lengthAdjust="spacingAndGlyphs" font-family="Liberation Sans" font-size="11.2" font-weight="normal" fill="#a0a7ae" stroke="#a0a7ae" stroke-width="0.45">LIMPOPO</text>
<text x="265.5" y="575.0" textLength="57.1" lengthAdjust="spacingAndGlyphs" font-family="Liberation Sans" font-size="11.2" font-weight="normal" fill="#fbfbfb" stroke="#fbfbfb" stroke-width="2" >GAUTENG</text>
<text x="265.5" y="575.0" textLength="57.1" lengthAdjust="spacingAndGlyphs" font-family="Liberation Sans" font-size="11.2" font-weight="normal" fill="#a0a7ae" stroke="#a0a7ae" stroke-width="0.45">GAUTENG</text>
<text x="165.7" y="577.3" textLength="41.7" lengthAdjust="spacingAndGlyphs" font-family="Liberation Sans" font-size="11.2" font-weight="normal" fill="#fbfbfb" stroke="#fbfbfb" stroke-width="2" >NORTH</text>
<text x="165.7" y="577.3" textLength="41.7" lengthAdjust="spacingAndGlyphs" font-family="Liberation Sans" font-size="11.2" font-weight="normal" fill="#a0a7ae" stroke="#a0a7ae" stroke-width="0.45">NORTH</text>
<text x="169.8" y="591.5" textLength="34.2" lengthAdjust="spacingAndGlyphs" font-family="Liberation Sans" font-size="11.2" font-weight="normal" fill="#fbfbfb" stroke="#fbfbfb" stroke-width="2" >WEST</text>
<text x="169.8" y="591.5" textLength="34.2" lengthAdjust="spacingAndGlyphs" font-family="Liberation Sans" font-size="11.2" font-weight="normal" fill="#a0a7ae" stroke="#a0a7ae" stroke-width="0.45">WEST</text>
<text x="99.8" y="718.0" textLength="115.5" lengthAdjust="spacingAndGlyphs" font-family="Liberation Sans" font-size="11.2" font-weight="normal" fill="#fbfbfb" stroke="#fbfbfb" stroke-width="2" >SOUTH AFRICA</text>
<text x="99.8" y="718.0" textLength="115.5" lengthAdjust="spacingAndGlyphs" font-family="Liberation Sans" font-size="11.2" font-weight="normal" fill="#a0a7ae" stroke="#a0a7ae" stroke-width="0.45">SOUTH AFRICA</text>
<text x="275.8" y="757.6" textLength="58.8" lengthAdjust="spacingAndGlyphs" font-family="Liberation Sans" font-size="11.2" font-weight="normal" fill="#fbfbfb" stroke="#fbfbfb" stroke-width="2" >LESOTHO</text>
<text x="275.8" y="757.6" textLength="58.8" lengthAdjust="spacingAndGlyphs" font-family="Liberation Sans" font-size="11.2" font-weight="normal" fill="#a0a7ae" stroke="#a0a7ae" stroke-width="0.45">LESOTHO</text>
<text x="408.0" y="605.5" textLength="65.0" lengthAdjust="spacingAndGlyphs" font-family="Liberation Sans" font-size="11.2" font-weight="normal" fill="#fbfbfb" stroke="#fbfbfb" stroke-width="2" >ESWATINI</text>
<text x="408.0" y="605.5" textLength="65.0" lengthAdjust="spacingAndGlyphs" font-family="Liberation Sans" font-size="11.2" font-weight="normal" fill="#a0a7ae" stroke="#a0a7ae" stroke-width="0.45">ESWATINI</text>
<text x="385.5" y="695.0" textLength="65.0" lengthAdjust="spacingAndGlyphs" font-family="Liberation Sans" font-size="11.2" font-weight="normal" fill="#fbfbfb" stroke="#fbfbfb" stroke-width="2" >KWAZULU-</text>
<text x="385.5" y="695.0" textLength="65.0" lengthAdjust="spacingAndGlyphs" font-family="Liberation Sans" font-size="11.2" font-weight="normal" fill="#a0a7ae" stroke="#a0a7ae" stroke-width="0.45">KWAZULU-</text>
<text x="399.2" y="708.7" textLength="37.6" lengthAdjust="spacingAndGlyphs" font-family="Liberation Sans" font-size="11.2" font-weight="normal" fill="#fbfbfb" stroke="#fbfbfb" stroke-width="2" >NATAL</text>
<text x="399.2" y="708.7" textLength="37.6" lengthAdjust="spacingAndGlyphs" font-family="Liberation Sans" font-size="11.2" font-weight="normal" fill="#a0a7ae" stroke="#a0a7ae" stroke-width="0.45">NATAL</text>
<path d="M37 154.8 H667" stroke="#48697c" stroke-width="1.2"/>
<rect x="113.6" y="105.5" width="2.8" height="49.8" fill="#154b6b"/>
<rect x="190.0" y="105.5" width="2.8" height="49.8" fill="#154b6b"/>
<rect x="269.7" y="105.5" width="2.8" height="49.8" fill="#154b6b"/>
<rect x="349.2" y="105.5" width="2.8" height="49.8" fill="#154b6b"/>
<rect x="425.9" y="105.5" width="2.8" height="49.8" fill="#154b6b"/>
<rect x="505.5" y="105.5" width="2.8" height="49.8" fill="#154b6b"/>
<rect x="585.1" y="105.5" width="2.8" height="49.8" fill="#154b6b"/>
<rect x="665.0" y="105.5" width="2.8" height="49.8" fill="#154b6b"/>
<text transform="translate(31.5,166.5) rotate(45)" font-family="Liberation Sans" font-size="9.6" fill="#4a4a4a">1st Mar 2022</text>
<text transform="translate(658.5,166) rotate(45)" font-family="Liberation Sans" font-size="9.9" fill="#4a4a4a">31st May 2024</text>
</svg><div style="position:absolute;left:651px;top:640px;width:28px;height:58px;border:2px solid rgba(0,0,0,0.2);border-radius:4px;background:#fff;background-clip:padding-box;">
<div style="position:absolute;left:0;top:29.3px;width:28px;height:1px;background:#ccc"></div>
<div style="position:absolute;left:8px;top:13.4px;width:12px;height:2.2px;background:#111"></div>
<div style="position:absolute;left:12.9px;top:8.6px;width:2.2px;height:12px;background:#111"></div>
<div style="position:absolute;left:8px;top:43.2px;width:12px;height:2.3px;background:#111"></div>
</div></div><!--endmap-->
<div id="panel">
 <div class="radio" style="left:34px;top:32px;border-color:#4a90e2;width:11px;height:11px;box-shadow:0 0 0 0.5px #8fc0f0"><div style="position:absolute;left:2px;top:2px;width:7px;height:7px;border-radius:50%;background:#1a73e8"></div></div>
 <div class="rlabel" style="left:49.5px;top:35.3px">FOOTPRINT</div>
 <div class="radio" style="left:121.5px;top:31.5px"></div>
 <div class="rlabel" style="left:139px;top:35.3px">DATASETS</div>
 <div class="t" style="top:84px;font-size:17.35px;font-weight:bold;line-height:24px;color:#333">vegetation_condition_index_limpopo</div>
 <div class="t" style="top:113.3px;font-size:17.2px;line-height:24px;color:#444">whole collection</div>
 <div class="t gray" style="top:154px">Last processed 1 month ago</div>
 <div class="t gray u" style="top:177px">8 datasets</div>
 <div class="t" style="top:204px">474,400km<sup style="font-size:10px;line-height:0;vertical-align:5px">2</sup> (approx.)</div>
 <div class="t" style="top:226px">No configured regions<span class="info">i</span></div>
 <div class="t" style="top:249px">Entirely EPSG:4326</div>
 <div class="t b" style="top:301px">Metadata (<span class="u" style="color:#333">eo3</span>)</div>
 <div class="t b" style="top:352px">Common fields<span class="info" style="background:#555">i</span></div>
 <div class="t" style="top:389px">cloud_cover <span class="wavy" style="color:#555">•</span></div>
 <div class="t" style="top:412px">dataset_maturity <span class="wavy">interim</span></div>
 <div class="t" style="top:435px">format <span class="wavy">GeoTIFF</span></div>
 <div class="t" style="top:457px">instrument <span class="wavy" style="color:#555">•</span></div>
 <div class="t" style="top:479px">platform <span class="wavy" style="color:#555">•</span></div>
 <div class="t" style="top:502px">product_family <span class="wavy">Agriculture</span></div>
 <div class="t" style="top:524px">region_code <span class="wavy" style="color:#555">•</span></div>
 <div class="t b" style="top:578px">JSON / GeoJSON</div>
 <div class="t u" style="top:615px;color:#444"><svg class="fic" viewBox="0 0 9.5 12"><path d="M0.7 0.7H6.2L8.8 3.3V11.3H0.7Z" fill="none" stroke="#444" stroke-width="1.2" stroke-linejoin="round"/><path d="M5.8 0.9V3.7H8.6" fill="none" stroke="#444" stroke-width="1"/><path d="M2.6 6.3H6.9M2.6 8H6.9M2.6 9.6H6.9" stroke="#666" stroke-width="0.8"/></svg> Footprint</div>
 <div class="t u" style="top:638px;color:#444"><svg class="fic" viewBox="0 0 9.5 12"><path d="M0.7 0.7H6.2L8.8 3.3V11.3H0.7Z" fill="none" stroke="#444" stroke-width="1.2" stroke-linejoin="round"/><path d="M5.8 0.9V3.7H8.6" fill="none" stroke="#444" stroke-width="1"/><path d="M2.6 6.3H6.9M2.6 8H6.9M2.6 9.6H6.9" stroke="#666" stroke-width="0.8"/></svg> Datasets</div>
 <div class="t u" style="top:661px;color:#444"><svg class="fic" viewBox="0 0 9.5 12"><path d="M0.7 0.7H6.2L8.8 3.3V11.3H0.7Z" fill="none" stroke="#444" stroke-width="1.2" stroke-linejoin="round"/><path d="M5.8 0.9V3.7H8.6" fill="none" stroke="#444" stroke-width="1"/><path d="M2.6 6.3H6.9M2.6 8H6.9M2.6 9.6H6.9" stroke="#666" stroke-width="0.8"/></svg> Timeline</div>
</div>
<div style="position:absolute;left:1021px;top:82px;width:1px;height:837px;background:#d8f2f8;z-index:5"></div>
<div id="cyanline" style="position:absolute;left:28px;top:82px;width:1px;height:837px;background:#d2f0f9;z-index:5"></div><div style="position:absolute;left:29px;top:82px;width:1px;height:837px;background:rgba(220,244,250,0.6);z-index:5"></div>
<div id="loc">
 <div style="position:absolute;left:29.5px;top:29.7px;font-size:17.1px;font-weight:bold;color:#1b2a35;white-space:nowrap;line-height:24px">Location</div>
 <div style="position:absolute;left:127.5px;top:33.5px;font-size:12.2px;color:#555;white-space:nowrap;line-height:18px">(samples)</div>
 <div class="mono" style="top:74.7px;color:#222">s3://iwmi-dt-odc-products-public/Natural_Basin_Characteristic/Land_cover_and_Land_use/vegetation_condition_index_limpopo/</div>
 <div class="mono" style="top:96.7px;color:#666;text-decoration:underline;text-underline-offset:1.5px">s3://iwmi-dt-odc-products-public/Natural_Basin_Characteristic/Land_cover_and_Land_use/vegetation_condition_index_limpopo/2022/03/31_interim/vegeta</div>
 <div class="mono" style="top:119.5px;color:#444">tion_condition_index_limpopo_2022-03-31_interim_odc-metadata.yaml</div>
</div>
</body></html>
